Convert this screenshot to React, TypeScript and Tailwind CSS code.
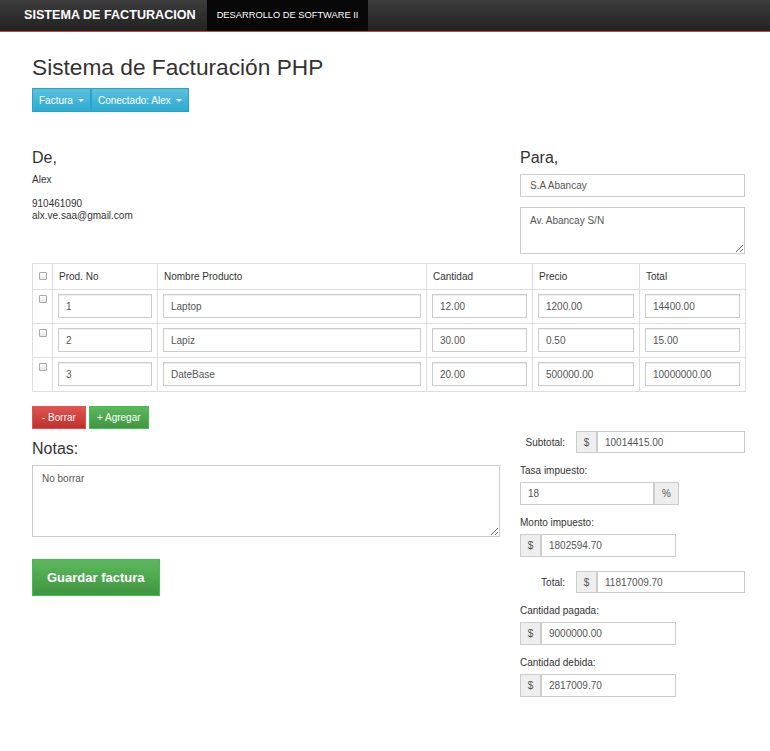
import React from 'react'

const rows = [
  { no: '1', name: 'Laptop', qty: '12.00', price: '1200.00', total: '14400.00' },
  { no: '2', name: 'Lapiz', qty: '30.00', price: '0.50', total: '15.00' },
  { no: '3', name: 'DateBase', qty: '20.00', price: '500000.00', total: '10000000.00' },
]

function Check() {
  return <span className="inline-block h-[8px] w-[8px] rounded-[1px] border border-[#a9a9a9] bg-linear-to-b from-white to-[#e6e6e6]" />
}

function Caret() {
  return <span className="ml-[5px] inline-block h-0 w-0 border-x-[3px] border-t-[3px] border-x-transparent border-t-white align-middle" />
}

function CellInput({ value }: { value: string }) {
  return (
    <input
      readOnly
      defaultValue={value}
      className="h-[24px] w-full border border-[#ccc] bg-white px-[7px] text-[10px] text-[#555] outline-none shadow-[inset_0_1px_1px_rgba(0,0,0,0.075)]"
    />
  )
}

function Addon({ children }: { children: React.ReactNode }) {
  return (
    <span className="flex items-center justify-center border border-[#ccc] bg-[#eee] text-[10px] text-[#555]">
      {children}
    </span>
  )
}

function Field({ value }: { value: string }) {
  return (
    <input
      readOnly
      defaultValue={value}
      className="min-w-0 flex-1 border border-[#ccc] bg-white px-[7px] text-[10px] text-[#555] outline-none"
    />
  )
}

function Label({ children }: { children: React.ReactNode }) {
  return <div className="text-[10px] leading-[12px] text-[#333]">{children}</div>
}

export default function App() {
  return (
    <div className="min-h-screen bg-white font-['Liberation_Sans',Arial,sans-serif] text-[#333]">
      <div className="flex h-[32px] border-b border-[#d0403c] bg-linear-to-b from-[#3d3d3d] to-[#222]">
        <div className="pl-[24px] pr-[11px] text-[12.6px] font-bold leading-[31px] text-white">SISTEMA DE FACTURACION</div>
        <div className="bg-[#080808] px-[10px] text-[9.3px] leading-[31px] text-white">DESARROLLO DE SOFTWARE II</div>
      </div>

      <div className="ml-[32px] w-[713px] pb-[40px]">
        <h1 className="mt-[22px] text-[22.7px] leading-[26px]">Sistema de Facturación PHP</h1>

        <div className="mt-[8px] flex">
          <button className="flex h-[24px] items-center border border-[#28a4c9] bg-linear-to-b from-[#5bc0de] to-[#2aabd2] px-[6px] text-[10px] text-white">
            Factura <Caret />
          </button>
          <button className="flex h-[24px] items-center border border-[#28a4c9] bg-linear-to-b from-[#5bc0de] to-[#2aabd2] px-[6px] text-[10px] text-white">
            Conectado: Alex <Caret />
          </button>
        </div>

        <div className="mt-[37px] flex justify-between">
          <div>
            <div className="text-[16px] leading-[18px]">De,</div>
            <div className="mt-[7px] text-[10px] leading-[12px]">
              <div>Alex</div>
              <div>&nbsp;</div>
              <div>910461090</div>
              <div>alx.ve.saa@gmail.com</div>
            </div>
          </div>
          <div className="w-[225px]">
            <div className="text-[16px] leading-[18px]">Para,</div>
            <input
              readOnly
              defaultValue="S.A Abancay"
              className="mt-[7px] h-[23px] w-full border border-[#ccc] px-[9px] text-[10px] text-[#555] outline-none"
            />
            <textarea
              readOnly
              defaultValue="Av. Abancay S/N"
              className="mt-[10px] block h-[47px] w-full border border-[#ccc] px-[9px] py-[5px] text-[10px] text-[#555] outline-none"
            />
          </div>
        </div>

        <table className="mt-[9px] w-[713px] table-fixed border-collapse text-[10px]">
          <thead>
            <tr>
              <th className="w-[20px] border border-[#ddd] pt-[6px] pb-[6px] text-center font-normal leading-[13px]"><Check /></th>
              <th className="w-[105px] border border-[#ddd] px-[6px] pt-[6px] pb-[6px] text-left font-normal leading-[13px]">Prod. No</th>
              <th className="w-[269px] border border-[#ddd] px-[6px] pt-[6px] pb-[6px] text-left font-normal leading-[13px]">Nombre Producto</th>
              <th className="w-[106px] border border-[#ddd] px-[6px] pt-[6px] pb-[6px] text-left font-normal leading-[13px]">Cantidad</th>
              <th className="w-[107px] border border-[#ddd] px-[6px] pt-[6px] pb-[6px] text-left font-normal leading-[13px]">Precio</th>
              <th className="w-[106px] border border-[#ddd] px-[6px] pt-[6px] pb-[6px] text-left font-normal leading-[13px]">Total</th>
            </tr>
          </thead>
          <tbody>
            {rows.map((r) => (
              <tr key={r.no}>
                <td className="border border-[#ddd] pt-[5px] text-center align-top leading-[8px]"><Check /></td>
                <td className="border border-[#ddd] px-[5px] pt-[4px] pb-[5px]"><CellInput value={r.no} /></td>
                <td className="border border-[#ddd] px-[5px] pt-[4px] pb-[5px]"><CellInput value={r.name} /></td>
                <td className="border border-[#ddd] px-[5px] pt-[4px] pb-[5px]"><CellInput value={r.qty} /></td>
                <td className="border border-[#ddd] px-[5px] pt-[4px] pb-[5px]"><CellInput value={r.price} /></td>
                <td className="border border-[#ddd] px-[5px] pt-[4px] pb-[5px]"><CellInput value={r.total} /></td>
              </tr>
            ))}
          </tbody>
        </table>

        <div className="mt-[14px] flex gap-[3px]">
          <button className="h-[23px] border border-[#e8524e] bg-linear-to-b from-[#dd5552] to-[#c12e2a] px-[9px] text-[10px] text-white">- Borrar</button>
          <button className="h-[23px] border border-[#3cc14b] bg-linear-to-b from-[#5cb85c] to-[#419641] px-[7px] text-[10px] text-white">+ Agregar</button>
        </div>

        <div className="mt-[2px] flex gap-[20px]">
          <div className="w-[468px] pt-[9px]">
            <div className="text-[16px] leading-[18px]">Notas:</div>
            <textarea
              readOnly
              defaultValue="No borrar"
              className="mt-[7px] block h-[72px] w-full border border-[#ccc] px-[9px] py-[5px] text-[10px] text-[#555] outline-none"
            />
            <button className="mt-[22px] h-[37px] border border-[#3cc14b] bg-linear-to-b from-[#5cb85c] to-[#419641] px-[14px] text-[13px] font-bold text-white">
              Guardar factura
            </button>
          </div>

          <div className="w-[225px]">
            <div className="flex h-[22px] items-center">
              <div className="w-[58px] text-right text-[10px]">Subtotal:</div>
              <div className="ml-[11px] flex h-full flex-1">
                <Addon><span className="w-[19px] text-center">$</span></Addon>
                <Field value="10014415.00" />
              </div>
            </div>

            <div className="mt-[12px]">
              <Label>Tasa impuesto:</Label>
              <div className="mt-[5px] flex h-[23px] w-[159px]">
                <Field value="18" />
                <Addon><span className="w-[23px] text-center">%</span></Addon>
              </div>
            </div>

            <div className="mt-[12px]">
              <Label>Monto impuesto:</Label>
              <div className="mt-[5px] flex h-[23px] w-[156px]">
                <Addon><span className="w-[19px] text-center">$</span></Addon>
                <Field value="1802594.70" />
              </div>
            </div>

            <div className="mt-[14px] flex h-[22px] items-center">
              <div className="w-[58px] text-right text-[10px]">Total:</div>
              <div className="ml-[11px] flex h-full flex-1">
                <Addon><span className="w-[19px] text-center">$</span></Addon>
                <Field value="11817009.70" />
              </div>
            </div>

            <div className="mt-[12px]">
              <Label>Cantidad pagada:</Label>
              <div className="mt-[5px] flex h-[23px] w-[156px]">
                <Addon><span className="w-[19px] text-center">$</span></Addon>
                <Field value="9000000.00" />
              </div>
            </div>

            <div className="mt-[12px]">
              <Label>Cantidad debida:</Label>
              <div className="mt-[5px] flex h-[23px] w-[156px]">
                <Addon><span className="w-[19px] text-center">$</span></Addon>
                <Field value="2817009.70" />
              </div>
            </div>
          </div>
        </div>
      </div>
    </div>
  )
}
